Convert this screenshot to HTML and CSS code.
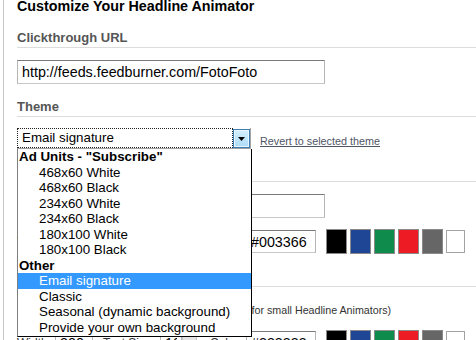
FILE: index.html
```html
<!DOCTYPE html>
<html lang="en-US">
<head>
  <title>Customize Your Headline Animator</title>
  <link rel="stylesheet" href="styles.css">
</head>
<body>

<div class="page">
  <h1>Customize Your Headline Animator</h1>

  <h2>Clickthrough URL</h2>
  <input class="text wide" type="text" value="http://feeds.feedburner.com/FotoFoto">

  <h2>Theme</h2>
  <div class="theme-row">
    <div class="select">
      <div class="select-value">Email signature</div>
      <div class="select-btn">
        <svg width="7" height="4" viewBox="0 0 7 4"><polygon points="0,0 7,0 3.5,4" fill="#000"/></svg>
      </div>

      <ul class="dropdown">
        <li class="group">Ad Units - "Subscribe"</li>
        <li>468x60 White</li>
        <li>468x60 Black</li>
        <li>234x60 White</li>
        <li>234x60 Black</li>
        <li>180x100 White</li>
        <li>180x100 Black</li>
        <li class="group">Other</li>
        <li class="selected">Email signature</li>
        <li>Classic</li>
        <li>Seasonal (dynamic background)</li>
        <li>Provide your own background</li>
      </ul>
    </div>
    <a class="revert" href="#">Revert to selected theme</a>
  </div>

  <h2>Headline</h2>
  <input class="text wide" type="text" value="FotoFoto">

  <div class="style-row">
    <span class="lbl lbl-w">Width</span>
    <input class="text num" type="text" value="300">
    <span class="lbl lbl-s">Text Size</span>
    <input class="text size" type="text" value="10">
    <span class="size-btn"></span>
    <span class="lbl lbl-c">Color</span>
    <input class="text color" type="text" value="#003366">
    <div class="swatches">
      <span class="swatch black"></span>
      <span class="swatch blue"></span>
      <span class="swatch green"></span>
      <span class="swatch red"></span>
      <span class="swatch gray"></span>
      <span class="swatch white"></span>
    </div>
  </div>

  <h2>Items</h2>
  <p class="note"><span class="note-lead">Text style for the second line</span>(for small Headline Animators)</p>

  <div class="style-row second">
    <span class="lbl lbl-w">Width</span>
    <input class="text num" type="text" value="300">
    <span class="lbl lbl-s">Text Size</span>
    <input class="text size" type="text" value="10">
    <span class="size-btn"></span>
    <span class="lbl lbl-c">Color</span>
    <input class="text color" type="text" value="#333333">
    <div class="swatches">
      <span class="swatch black"></span>
      <span class="swatch blue"></span>
      <span class="swatch green"></span>
      <span class="swatch red"></span>
      <span class="swatch gray"></span>
      <span class="swatch white"></span>
    </div>
  </div>
</div>

</body>
</html>
```

FILE: styles.css
```css
html, body {
  margin: 0;
  height: 100%;
  overflow: hidden;
}

body {
  font-family: "Liberation Sans", Arial, Helvetica, sans-serif;
  background: white;
  color: black;
}

h1, h2, p, ul, li {
  margin: 0;
  padding: 0;
}

div.page {
  margin-left: 3px;
  padding-left: 13px;
  border-left: 1px solid #c6c6c6;
  min-height: 100%;
}

h1 {
  font-size: 14.3px;
  font-weight: bold;
  line-height: 16px;
  margin-top: -2px;
}

h2 {
  font-size: 13px;
  font-weight: bold;
  line-height: 15px;
  color: #555;
  margin-top: 15px;
  padding-bottom: 2px;
  border-bottom: 1px solid #dcdcdc;
}

h1 + h2 { margin-top: 16px; }

input.text {
  display: block;
  box-sizing: border-box;
  font-family: inherit;
  font-size: 14.3px;
  color: black;
  height: 24px;
  margin: 0;
  padding: 0 4px;
  border: 1px solid;
  border-color: #7a7a7a #b5b5b5 #c8c8c8 #b5b5b5;
  background: white;
  outline: none;
}

input.wide {
  width: 308px;
  margin-top: 12px;
}

/* theme select, drawn open */
div.theme-row {
  display: flex;
  align-items: center;
  margin-top: 11px;
}

div.select {
  position: relative;
  display: flex;
  width: 233px;
  height: 20px;
  border-right: 1px solid #a5a5a5;
  border-bottom: 1px solid #a0a0a0;
  font-size: 13.33px;
}

div.select-value {
  box-sizing: border-box;
  width: 216px;
  height: 20px;
  padding-left: 4px;
  line-height: 18px;
  border: 1px dotted #222;
}

div.select-btn {
  box-sizing: border-box;
  width: 17px;
  height: 19px;
  margin-top: 1px;
  border: 1px solid #3c7db3;
  background: linear-gradient(#d2eefc, #aedcf6);
  box-shadow: inset 0 0 0 1px #e9f6fd;
  display: flex;
  align-items: center;
  justify-content: center;
}

ul.dropdown {
  position: absolute;
  top: 21px;
  left: 0;
  width: 233px;
  list-style: none;
  background: white;
  border: 1px solid #000;
  border-top: none;
  border-left-color: #7f7f7f;
  padding-bottom: 1px;
  z-index: 2;
}

ul.dropdown li {
  line-height: 15.5px;
  height: 15.5px;
  padding-left: 21px;
  white-space: nowrap;
}

ul.dropdown li.group {
  font-weight: bold;
  padding-left: 1px;
}

ul.dropdown li.selected {
  background: #3399ff;
  color: white;
}

a.revert {
  margin-left: 9px;
  padding-top: 4px;
  font-size: 10.8px;
  color: #4f5666;
}

/* width / size / colour rows */
div.style-row {
  display: flex;
  align-items: center;
  height: 25px;
  margin-top: 11px;
  font-size: 12px;
  color: #333;
}

div.style-row.second { margin-top: 13px; }

span.lbl { white-space: nowrap; }
span.lbl-w { width: 38px; }
span.lbl-s { width: 57px; margin-left: 10px; }
span.lbl-c { width: 36px; margin-left: 13px; }

input.num { width: 38px; height: 23px; }
input.size { width: 22px; height: 23px; }
input.color { width: 70px; height: 23px; }

span.size-btn {
  box-sizing: border-box;
  width: 15px;
  height: 23px;
  background: #e4e4e4;
  border: 1px solid #c4c4c4;
}

div.swatches {
  display: flex;
  align-items: center;
  gap: 3px;
  margin-left: 10px;
}

span.swatch {
  box-sizing: border-box;
  width: 21px;
  height: 25px;
  border: 1px solid #8a8a8a;
}

span.black { background: #000; }
span.blue { background: #1f4595; }
span.green { background: #0f8b4b; }
span.red { background: #ed1c24; }
span.gray { background: #666; }

span.white {
  width: 19px;
  height: 23px;
  background: #fff;
  border-color: #a3a3a3;
}

p.note {
  margin-top: 17px;
  font-size: 10.7px;
  line-height: 13px;
  color: #333;
  white-space: nowrap;
}

span.note-lead {
  display: inline-block;
  width: 231px;
  overflow: hidden;
  vertical-align: top;
}
```
